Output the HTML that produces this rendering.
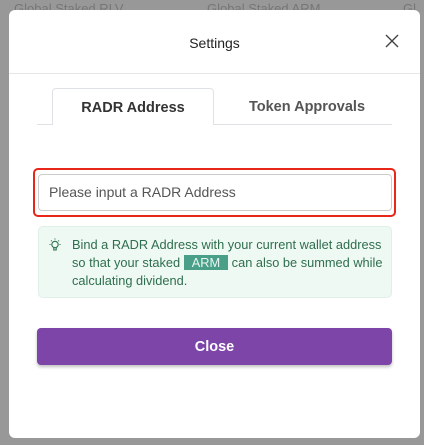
<!DOCTYPE html>
<html><head><meta charset="utf-8"><style>
*{box-sizing:border-box;margin:0;padding:0}
body{width:424px;height:445px;overflow:hidden;background:#989898;font-family:"Liberation Sans",sans-serif;position:relative}
.bgtxt{position:absolute;top:1px;color:#555;font-size:13px;opacity:.5}
.modal{position:absolute;left:9px;top:10px;width:411px;height:428px;background:#fff;border-radius:6px}
.title{position:absolute;top:25px;left:0;width:100%;text-align:center;font-size:14px;color:#222}
.x{position:absolute;left:376px;top:24px}
.hr{position:absolute;top:63px;left:0;width:100%;height:1px;background:#e6e6e6}
.tabline{position:absolute;left:28px;top:114px;width:355px;height:1px;background:#dee2e6}
.tab1{position:absolute;left:43px;top:78px;width:162px;height:37px;border:1px solid #dee2e6;border-bottom:none;border-radius:4px 4px 0 0;background:#fff;text-align:center;line-height:38px;font-size:14.5px;color:#333;font-weight:bold}
.tab2{position:absolute;left:213px;top:78px;width:170px;height:37px;text-align:center;line-height:38px;font-size:14.5px;color:#555;font-weight:bold}
.red{position:absolute;left:24px;top:158px;width:363px;height:49px;border:2px solid #e8261a;border-radius:5px}
.inp{position:absolute;left:29px;top:164px;width:354px;height:37px;border:1px solid #ccc;border-radius:4px;font-size:14px;color:#555;padding-left:10px;line-height:35px}
.tip{position:absolute;left:29px;top:216px;width:354px;height:72px;background:#eef9f3;border:1px solid #e0f0e6;border-radius:5px;color:#2f6e4e;font-size:12.8px;line-height:18px;padding:9px 0 0 33px;white-space:nowrap}
.arm{background:#4a9f89;color:#eaf6f1;padding:0 8px}
.bulb{position:absolute;left:8px;top:10px}
.btn{position:absolute;left:28px;top:318px;width:355px;height:37px;background:#7e45a8;border-radius:4px;color:#fff;text-align:center;line-height:39px;font-size:14.5px;font-weight:bold;box-shadow:0 2px 3px rgba(0,0,0,.25)}
</style></head><body>
<div class="bgtxt" style="left:14px">Global Staked RLV</div>
<div class="bgtxt" style="left:207px">Global Staked ARM</div>
<div class="bgtxt" style="left:403px">Gl</div>
<div class="modal">
<div class="title">Settings</div>
<svg class="x" width="14" height="14" viewBox="0 0 14 14"><path d="M1 1L13 13M13 1L1 13" stroke="#444" stroke-width="1.4"/></svg>
<div class="hr"></div>
<div class="tabline"></div>
<div class="tab1">RADR Address</div>
<div class="tab2">Token Approvals</div>
<div class="red"></div>
<div class="inp">Please input a RADR Address</div>
<div class="tip">
<svg class="bulb" width="16" height="16" viewBox="0 0 16 16" fill="none" stroke="#2f6e4e" stroke-width="1.1"><circle cx="8" cy="7.5" r="3.2"/><path d="M6.8 10.5v2.5h2.4v-2.5"/><path d="M8 1.5v1M2.5 7.5h1M12.5 7.5h1M4 3.5l.7.7M12 3.5l-.7.7"/></svg>
Bind a RADR Address with your current wallet address<br>so that your staked <span class="arm">ARM</span> can also be summed while<br>calculating dividend.</div>
<div class="btn">Close</div>
</div>
</body></html>
